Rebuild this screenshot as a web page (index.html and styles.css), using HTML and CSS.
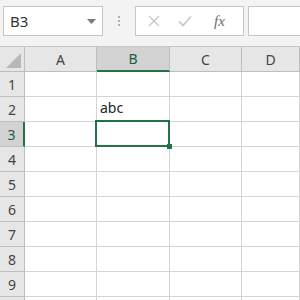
FILE: index.html
```html
<!DOCTYPE html>
<html lang="ja">
<head>
  <meta charset="UTF-8">
  <title>Sheet</title>
  <link rel="stylesheet" href="styles.css">
</head>
<body>

  <div class="formula-bar">
    <div class="name-box">
      <span>B3</span>
      <svg class="arrow" width="9" height="5" viewBox="0 0 9 5"><path d="M0 0h9L4.5 5z" fill="#7a7a7a"/></svg>
    </div>
    <div class="grip"><i></i><i></i><i></i></div>
    <div class="buttons">
      <svg class="btn-x" width="12" height="12" viewBox="0 0 12 12"><path d="M1 1l10 10M11 1L1 11" stroke="#c8c8c8" stroke-width="1.4"/></svg>
      <svg class="btn-ok" width="14" height="12" viewBox="0 0 14 12"><path d="M1 6.5l4 4L13 1.5" stroke="#c8c8c8" stroke-width="1.8" fill="none"/></svg>
      <span class="fx">fx</span>
    </div>
    <div class="formula-input"></div>
  </div>

  <div class="sheet">
    <div class="corner"><span class="tri"></span></div>
    <div class="col-head">A</div>
    <div class="col-head active">B</div>
    <div class="col-head">C</div>
    <div class="col-head">D</div>

    <div class="row-head">1</div><div class="cell"></div><div class="cell"></div><div class="cell"></div><div class="cell"></div>
    <div class="row-head">2</div><div class="cell"></div><div class="cell">abc</div><div class="cell"></div><div class="cell"></div>
    <div class="row-head active">3</div><div class="cell"></div><div class="cell selected"></div><div class="cell"></div><div class="cell"></div>
    <div class="row-head">4</div><div class="cell"></div><div class="cell"></div><div class="cell"></div><div class="cell"></div>
    <div class="row-head">5</div><div class="cell"></div><div class="cell"></div><div class="cell"></div><div class="cell"></div>
    <div class="row-head">6</div><div class="cell"></div><div class="cell"></div><div class="cell"></div><div class="cell"></div>
    <div class="row-head">7</div><div class="cell"></div><div class="cell"></div><div class="cell"></div><div class="cell"></div>
    <div class="row-head">8</div><div class="cell"></div><div class="cell"></div><div class="cell"></div><div class="cell"></div>
    <div class="row-head">9</div><div class="cell"></div><div class="cell"></div><div class="cell"></div><div class="cell"></div>
    <div class="row-head"></div><div class="cell"></div><div class="cell"></div><div class="cell"></div><div class="cell"></div>
  </div>

</body>
</html>
```

FILE: styles.css
```css
* {
  margin: 0;
  padding: 0;

  box-sizing: border-box;
  font-family: 'Noto Sans', 'Noto Sans CJK JP', sans-serif;
}

body {
  width: 300px;
  height: 300px;
  overflow: hidden;
  background: #fff;
}

/* Formula bar */
.formula-bar {
  display: flex;
  align-items: center;
  height: 46px;
  padding: 0 0 4px 3px;

  background: #f3f3f3;
}

.name-box {
  display: flex;
  align-items: center;
  justify-content: space-between;

  width: 100px;
  height: 30px;
  padding: 0 6px 0 6px;

  background: #fff;
  border: 1px solid #c6c6c6;
  color: #333;
  font-size: 15px;
}

.grip {
  display: flex;
  flex-direction: column;
  gap: 2px;
  width: 32px;
  align-items: center;
}

.grip i {
  width: 2px;
  height: 2px;
  background: #b0b0b0;
}

.buttons {
  display: flex;
  align-items: center;

  width: 109px;
  height: 30px;
  padding-left: 12px;

  background: #fff;
  border: 1px solid #c6c6c6;
}

.btn-ok {
  margin-left: 18px;
}

.fx {
  margin-left: 22px;

  color: #6b6b6b;
  font-family: 'Liberation Serif', serif;
  font-style: italic;
  font-size: 15px;
}

.formula-input {
  flex: 1;
  height: 30px;
  margin-left: 4px;

  background: #fff;
  border: 1px solid #c6c6c6;
  border-right: none;
}

/* Sheet grid */
.sheet {
  display: grid;
  grid-template-columns: 25px 72px 73px 72px 1fr;
  grid-auto-rows: 25px;

  border-top: 1px solid #c6c6c6;
}

.corner {
  position: relative;
  background: #e6e6e6;
  border-right: 1px solid #bdbdbd;
  border-bottom: 1px solid #bdbdbd;
}

.tri {
  position: absolute;
  right: 3px;
  bottom: 3px;
  width: 0;
  height: 0;
  border-left: 15px solid transparent;
  border-bottom: 15px solid #b7b7b7;
}

.col-head,
.row-head {
  display: flex;
  align-items: center;
  justify-content: center;

  background: #e6e6e6;
  border-right: 1px solid #bdbdbd;
  border-bottom: 1px solid #bdbdbd;
  color: #444;
  font-size: 14px;
}

.col-head.active {
  background: #d2d2d2;
  border-bottom: 2px solid #217346;
  color: #1d5e3d;
}

.row-head.active {
  background: #d2d2d2;
  border-right: 2px solid #217346;
  color: #1d5e3d;
}

.cell {
  position: relative;
  padding: 1px 3px 0;

  border-right: 1px solid #d4d4d4;
  border-bottom: 1px solid #d4d4d4;
  color: #222;
  font-size: 14px;
  line-height: 20px;
}

.selected::after {
  content: '';
  position: absolute;
  top: -2px;
  left: -2px;
  right: -1px;
  bottom: -1px;
  border: 2px solid #217346;
}

.selected::before {
  content: '';
  position: absolute;
  right: -3px;
  bottom: -3px;
  width: 5px;
  height: 5px;
  background: #217346;
  z-index: 1;
}
```
